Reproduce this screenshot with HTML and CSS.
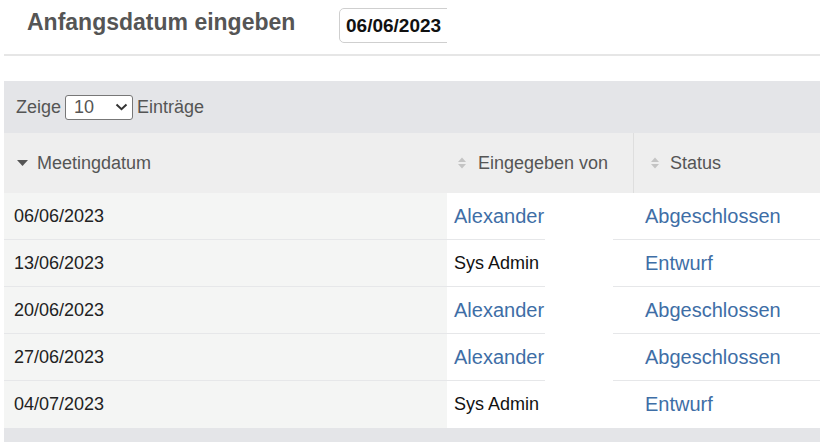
FILE: index.html
```html
<!DOCTYPE html>
<html lang="de">
<head>
<meta charset="utf-8">
<title>Meetings</title>
<link rel="stylesheet" href="styles.css">
</head>
<body>
<div class="page">
  <div class="filter">
    <h2 class="filter-title">Anfangsdatum eingeben</h2>
    <div class="date-wrap"><input class="date-input" type="text" value="06/06/2023"></div>
  </div>

  <div class="table-wrap">
    <div class="toolbar">
      <span>Zeige</span>
      <span class="select"><span class="select-val">10</span>
        <svg class="chev" width="13" height="8" viewBox="0 0 13 8"><path d="M1.5 1.5 L6.5 6.2 L11.5 1.5" fill="none" stroke="#333" stroke-width="2"/></svg>
      </span>
      <span>Einträge</span>
    </div>

    <div class="thead">
      <div class="th th-date">
        <svg class="sort-desc" width="11" height="6" viewBox="0 0 11 6"><path d="M0 0 H11 L5.5 6 Z" fill="#555"/></svg>
        <span>Meetingdatum</span>
      </div>
      <div class="th th-user">
        <svg class="sort-both" width="8" height="12" viewBox="0 0 8 12"><path d="M0 5 L4 0.5 L8 5 Z M0 7 L8 7 L4 11.5 Z" fill="#c4c4c4"/></svg>
        <span>Eingegeben von</span>
      </div>
      <div class="th th-status">
        <svg class="sort-both" width="8" height="12" viewBox="0 0 8 12"><path d="M0 5 L4 0.5 L8 5 Z M0 7 L8 7 L4 11.5 Z" fill="#c4c4c4"/></svg>
        <span>Status</span>
      </div>
    </div>

    <div class="tbody">
      <div class="tr">
        <div class="td td-date">06/06/2023</div>
        <div class="td td-user"><a class="link">Alexander</a></div>
        <div class="td td-gap"></div>
        <div class="td td-status"><a class="link">Abgeschlossen</a></div>
      </div>
      <div class="tr">
        <div class="td td-date">13/06/2023</div>
        <div class="td td-user">Sys Admin</div>
        <div class="td td-gap"></div>
        <div class="td td-status"><a class="link">Entwurf</a></div>
      </div>
      <div class="tr">
        <div class="td td-date">20/06/2023</div>
        <div class="td td-user"><a class="link">Alexander</a></div>
        <div class="td td-gap"></div>
        <div class="td td-status"><a class="link">Abgeschlossen</a></div>
      </div>
      <div class="tr">
        <div class="td td-date">27/06/2023</div>
        <div class="td td-user"><a class="link">Alexander</a></div>
        <div class="td td-gap"></div>
        <div class="td td-status"><a class="link">Abgeschlossen</a></div>
      </div>
      <div class="tr tr-last">
        <div class="td td-date">04/07/2023</div>
        <div class="td td-user">Sys Admin</div>
        <div class="td td-gap"></div>
        <div class="td td-status"><a class="link">Entwurf</a></div>
      </div>
    </div>
    <div class="tfoot"></div>
  </div>
</div>
</body>
</html>
```

FILE: styles.css
```css
* { box-sizing: border-box; }
html, body { margin: 0; padding: 0; background: #fff; }
body {
  font-family: "Liberation Sans", Arial, sans-serif;
  font-size: 18px;
  color: #222;
  overflow: hidden;
  width: 820px;
  height: 442px;
}
.page { padding-left: 4px; width: 820px; }

.filter {
  display: flex;
  align-items: flex-start;
  height: 56px;
  border-bottom: 2px solid #e6e6e6;
}
.filter-title {
  margin: 9px 0 0 23px;
  font-size: 23px;
  line-height: 26px;
  font-weight: bold;
  color: #555;
  width: 312px;
}
.date-wrap {
  margin-top: 8px;
  width: 108px;
  overflow: hidden;
}
.date-input {
  display: block;
  width: 130px;
  height: 35px;
  border: 1px solid #cfcfcf;
  border-radius: 5px;
  padding: 0 0 0 6px;
  font-family: "Liberation Sans", Arial, sans-serif;
  font-size: 19px;
  font-weight: bold;
  color: #111;
  background: #fff;
  outline: none;
}

.table-wrap { margin-top: 25px; }

.toolbar {
  display: flex;
  align-items: center;
  gap: 4px;
  height: 52px;
  padding-left: 12px;
  background: #e4e5e8;
  color: #555;
}
.select {
  display: inline-flex;
  align-items: center;
  justify-content: space-between;
  width: 68px;
  height: 25px;
  padding: 0 4px 0 8px;
  border: 1px solid #777;
  border-radius: 3px;
  background: #fff;
  color: #555;
}
.select-val { line-height: 1; }
.chev { display: block; }

.thead {
  display: flex;
  height: 60px;
  background: #eeeeee;
  color: #555;
}
.th {
  display: flex;
  align-items: center;
  height: 100%;
}
.th-date { width: 443px; padding-left: 13px; gap: 9px; }
.th-user { width: 187px; padding-left: 11px; gap: 12px; border-right: 1px solid #dedede; }
.th-status { flex: 1; padding-left: 17px; gap: 11px; }

.tr {
  display: flex;
  height: 47px;
}
.td {
  display: flex;
  align-items: center;
  height: 100%;
  border-bottom: 1px solid #e6e7e9;
}
.tr-last .td { border-bottom: none; }
.td-date { width: 443px; padding-left: 10px; background: #f4f5f4; color: #222; }
.td-user { width: 98px; padding-left: 7px; background: #fff; color: #111; white-space: nowrap; }
.td-gap { width: 68px; border-bottom: none; background: #fff; }
.td-status { flex: 1; padding-left: 32px; background: #fff; }
.link {
  font-size: 20px;
  color: #3e6ea6;
  text-decoration: none;
}

.tfoot { height: 16px; background: #e4e5e8; }
```
